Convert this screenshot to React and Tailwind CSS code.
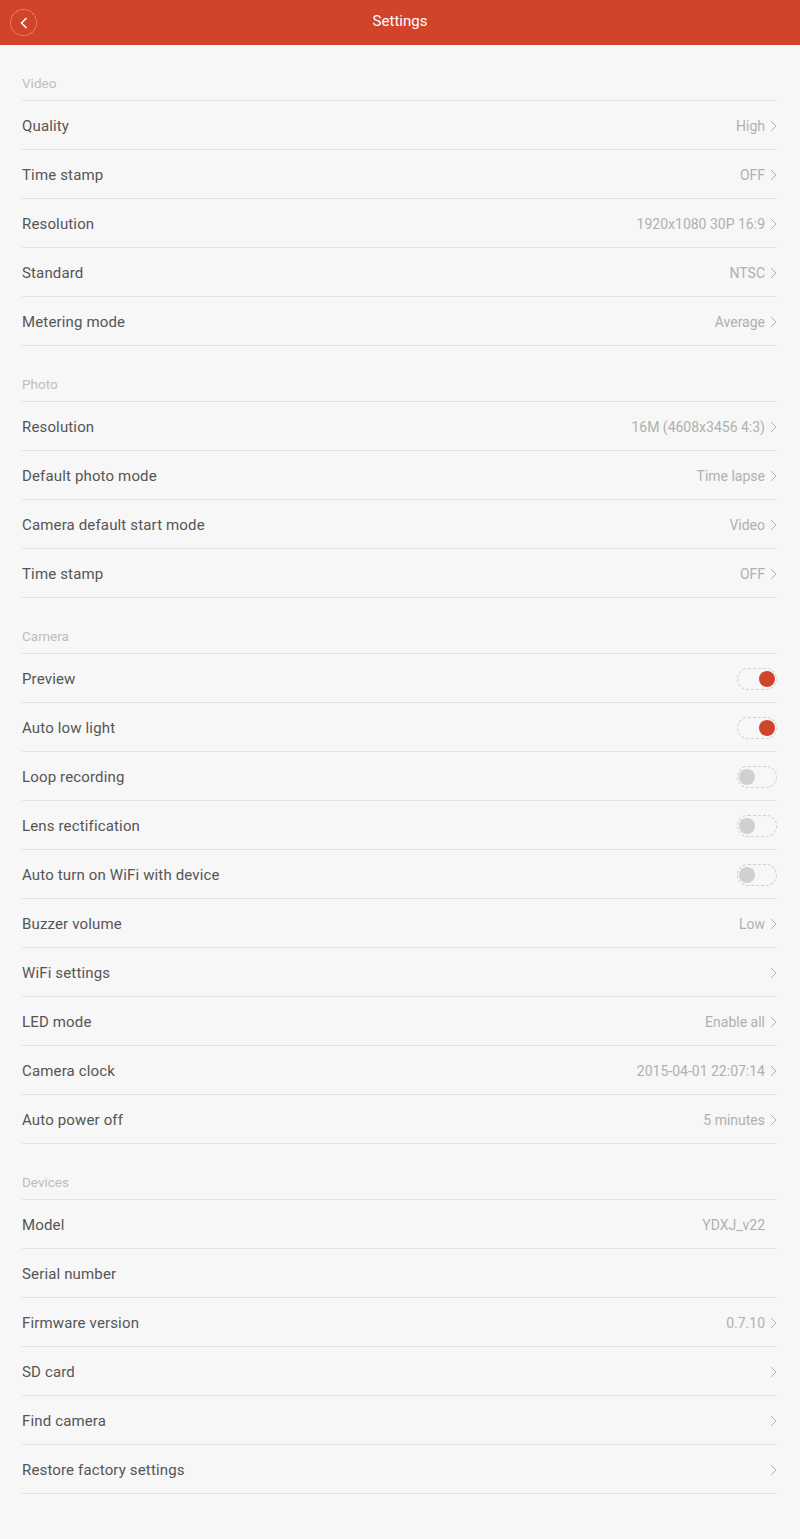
import React from 'react'

const sections = [
  {
    title: 'Video',
    rows: [
      { label: 'Quality', value: 'High', arrow: true },
      { label: 'Time stamp', value: 'OFF', arrow: true },
      { label: 'Resolution', value: '1920x1080 30P 16:9', arrow: true },
      { label: 'Standard', value: 'NTSC', arrow: true },
      { label: 'Metering mode', value: 'Average', arrow: true },
    ],
  },
  {
    title: 'Photo',
    rows: [
      { label: 'Resolution', value: '16M (4608x3456 4:3)', arrow: true },
      { label: 'Default photo mode', value: 'Time lapse', arrow: true },
      { label: 'Camera default start mode', value: 'Video', arrow: true },
      { label: 'Time stamp', value: 'OFF', arrow: true },
    ],
  },
  {
    title: 'Camera',
    rows: [
      { label: 'Preview', toggle: true, on: true },
      { label: 'Auto low light', toggle: true, on: true },
      { label: 'Loop recording', toggle: true, on: false },
      { label: 'Lens rectification', toggle: true, on: false },
      { label: 'Auto turn on WiFi with device', toggle: true, on: false },
      { label: 'Buzzer volume', value: 'Low', arrow: true },
      { label: 'WiFi settings', value: '', arrow: true },
      { label: 'LED mode', value: 'Enable all', arrow: true },
      { label: 'Camera clock', value: '2015-04-01 22:07:14', arrow: true },
      { label: 'Auto power off', value: '5 minutes', arrow: true },
    ],
  },
  {
    title: 'Devices',
    rows: [
      { label: 'Model', value: 'YDXJ_v22', arrow: false },
      { label: 'Serial number', value: '', arrow: false },
      { label: 'Firmware version', value: '0.7.10', arrow: true },
      { label: 'SD card', value: '', arrow: true },
      { label: 'Find camera', value: '', arrow: true },
      { label: 'Restore factory settings', value: '', arrow: true },
    ],
  },
]

function Chevron() {
  return (
    <svg className="w-[7px] h-[12px] ml-[5px]" viewBox="0 0 7 12" fill="none">
      <path d="M1 1l5 5-5 5" stroke="#b0b0b0" strokeWidth="1" />
    </svg>
  )
}

function Toggle({ on }) {
  return (
    <div className="w-[40px] h-[22px] rounded-full border border-dashed border-[#cfcfcf] relative">
      <div
        className={
          on
            ? 'absolute right-[1px] top-[2px] w-[16px] h-[16px] rounded-full bg-[#d2432b]'
            : 'absolute left-[1px] top-[2px] w-[16px] h-[16px] rounded-full bg-[#d0d0d0]'
        }
      />
    </div>
  )
}

function Row({ row }) {
  return (
    <div className="h-[49px] flex items-center justify-between border-b border-[#e2e2e2]">
      <span className="text-[15px] tracking-[0.15px] text-[#555555] pt-[2px]">{row.label}</span>
      <div className="flex items-center pt-[2px]">
        {row.toggle ? (
          <Toggle on={row.on} />
        ) : (
          <>
            {row.value && <span className="text-[14px] text-[#b0b0b0]">{row.value}</span>}
            {row.arrow ? <Chevron /> : <span className="w-[12px]" />}
          </>
        )}
      </div>
    </div>
  )
}

export default function App() {
  return (
    <div className="min-h-screen bg-[#f7f7f7]" style={{ fontFamily: 'Roboto, "Noto Sans", sans-serif' }}>
      {/* Шапка */}
      <div className="h-[45px] bg-[#d2432b] flex items-center justify-center relative">
        <div className="absolute left-[10px] top-[9px] w-[27px] h-[27px] rounded-full border border-dotted border-[#f3b8ab] flex items-center justify-center">
          <svg className="w-[8px] h-[12px]" viewBox="0 0 8 12" fill="none">
            <path d="M6.5 1L1.5 6l5 5" stroke="white" strokeWidth="1.6" />
          </svg>
        </div>
        <span className="text-white text-[15px] -mt-[2px]">Settings</span>
      </div>

      <div className="pl-[22px] pr-[23px]">
        {sections.map((s) => (
          <div key={s.title}>
            <div className="h-[56px] flex items-end pb-[7px] border-b border-[#e2e2e2]">
              <span className="text-[13.5px] leading-[20px] text-[#bdbdbd]">{s.title}</span>
            </div>
            {s.rows.map((r, i) => (
              <Row key={i} row={r} />
            ))}
          </div>
        ))}
      </div>
    </div>
  )
}
